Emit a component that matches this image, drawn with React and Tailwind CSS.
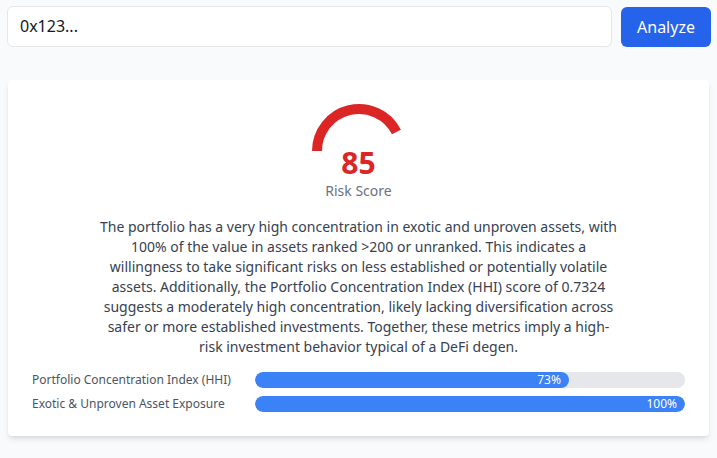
import React from "react";

function Gauge({ score }) {
  const r = 42;
  const cx = 48;
  const cy = 48;
  const a = Math.PI * (1 - score / 100);
  const ex = cx + r * Math.cos(a);
  const ey = cy - r * Math.sin(a);
  return (
    <svg width="96" height="48" viewBox="0 0 96 48" className="block">
      <path
        d={`M ${cx - r} ${cy} A ${r} ${r} 0 0 1 ${ex} ${ey}`}
        fill="none"
        stroke="#dc2626"
        strokeWidth="10"
      />
    </svg>
  );
}

function Bar({ label, value }) {
  return (
    <div className="flex items-center h-4">
      <div className="w-[223px] shrink-0 text-xs leading-4 text-[#4b5563]">{label}</div>
      <div className="flex-1 h-4 rounded-full bg-[#e5e7eb] overflow-hidden">
        <div
          className="h-4 rounded-full bg-[#3b82f6] flex items-center justify-end pr-2 text-xs leading-4 text-white"
          style={{ width: `${value}%` }}
        >
          {value}%
        </div>
      </div>
    </div>
  );
}

export default function App() {
  return (
    <div className="min-h-screen bg-[#f9fafb] font-['Noto_Sans',sans-serif] pt-[5px]">
      <div className="flex items-center gap-[9px] pl-[7px] pr-[6px]">
        <input
          defaultValue="0x123..."
          className="flex-1 h-[41px] px-3 text-base text-[#111827] bg-white border border-[#e5e7eb] rounded-md outline-none"
        />
        <button className="h-10 w-[90px] mt-[2px] rounded-md bg-[#2563eb] text-white text-base">
          Analyze
        </button>
      </div>
      <div className="mt-[33px] mx-[8px] bg-white rounded shadow-md p-6">
        <div className="flex flex-col items-center">
          <div className="-mt-px">
            <Gauge score={85} />
          </div>
          <div className="-mt-1.5 text-3xl leading-9 font-bold text-[#dc2626]">85</div>
          <div className="text-sm leading-5 text-[#6b7280]">Risk Score</div>
          <p className="mt-4 max-w-[519.5px] text-center text-sm leading-5 text-[#374151]">
            The portfolio has a very high concentration in exotic and unproven assets, with 100% of the value in assets ranked &gt;200 or unranked. This indicates a willingness to take significant risks on less established or potentially volatile assets. Additionally, the Portfolio Concentration Index (HHI) score of 0.7324 suggests a moderately high concentration, likely lacking diversification across safer or more established investments. Together, these metrics imply a high-risk investment behavior typical of a DeFi degen.
          </p>
        </div>
        <div className="mt-[15px] flex flex-col gap-2">
          <Bar label="Portfolio Concentration Index (HHI)" value={73} />
          <Bar label="Exotic & Unproven Asset Exposure" value={100} />
        </div>
      </div>
    </div>
  );
}
